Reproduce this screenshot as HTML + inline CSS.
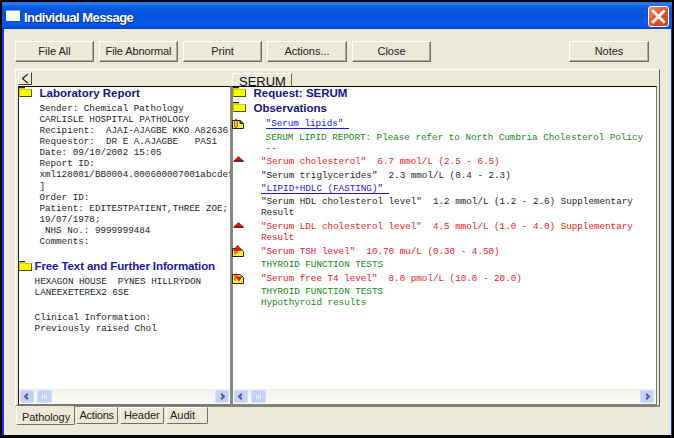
<!DOCTYPE html>
<html><head><meta charset="utf-8"><title>Individual Message</title>
<style>
*{box-sizing:border-box;margin:0;padding:0}
html,body{width:674px;height:438px;overflow:hidden;background:#000}
body{position:relative;font-family:"Liberation Sans",Arial,sans-serif;font-size:11px;color:#222}
.abs{position:absolute}
#win{position:absolute;left:2px;top:2px;width:670px;height:433px;background:#0a3ce0;border-radius:1px 1px 0 0}
#title{position:absolute;left:2px;top:2px;width:670px;height:27px;border-radius:1px 1px 0 0;background:linear-gradient(#1c6cf0 0%,#2b7cf3 7%,#0b5de0 18%,#0452de 45%,#0458e8 75%,#0656e4 88%,#0345c8 100%)}
#ico{position:absolute;left:6px;top:10px;width:14px;height:11px;background:#fffffa;border-top:1px solid #7fa6f5;box-shadow:0 0 1px #1a3a9a}
#ttxt{position:absolute;left:24px;top:10px;font:bold 13px/15px "Liberation Sans",sans-serif;color:#fff;letter-spacing:-0.55px;text-shadow:1px 1px 1px #0a2a8a;white-space:nowrap}
#close{position:absolute;left:648px;top:6px;width:21px;height:21px;border:1px solid #fff;border-radius:3px;background:linear-gradient(135deg,#ee9478 0%,#e05a34 45%,#cc4014 100%)}
#client{position:absolute;left:4px;top:29px;width:667px;height:406px;background:#ece9d8}
.btn{position:absolute;top:41px;height:21px;width:79px;background:#ece9d8;border:1px solid;border-color:#fff #716f64 #716f64 #fff;box-shadow:inset -1px -1px 0 #aca899;text-align:center;font:11px/18px "Liberation Sans",sans-serif;color:#222}
.mono{font-family:"Liberation Mono",monospace;font-size:9.25px;line-height:11px;white-space:pre;color:#262626}
.hd{position:absolute;font:bold 11.5px/12px "Liberation Sans",sans-serif;color:#15158a;white-space:nowrap}
.folder{position:absolute;width:13px;height:8px;background:#ffff00;border:1px solid;border-color:#c8c800 #5a5a00 #4a4a00 #c8c800}
.folder:before{content:"";position:absolute;left:-1px;top:-3px;width:6px;height:2px;background:#d8d800;border-top:1px solid #222}
.pane{position:absolute;background:#fff;overflow:hidden}
.ln{position:absolute;white-space:pre}
.red{color:#f01818}.grn{color:#128a12}.blu{color:#1818e8}
.ul{position:absolute;height:1px;background:#1818e8}
.sb{position:absolute;height:15px;background:linear-gradient(#f1efe9,#fefefb)}
.sbb{position:absolute;top:1px;width:14px;height:13px;background:#c2d2fc;border:1px solid #d3defd;border-radius:2px}
.sbb svg{position:absolute;left:0;top:0}
.tab{position:absolute;font:11px/14px "Liberation Sans",sans-serif;color:#222;background:#ece9d8;white-space:nowrap}
.icon{position:absolute}
</style></head><body>
<div id="win"></div>
<div id="title"></div>
<div id="ico"></div>
<div id="ttxt">Individual Message</div>
<div id="close"><svg width="19" height="19" viewBox="0 0 19 19"><path d="M3.2 3.2 L15.8 15.8 M15.8 3.2 L3.2 15.8" stroke="#fff" stroke-width="2.7"/></svg></div>
<div id="client"></div>

<div class="btn" style="left:15px">File All</div>
<div class="btn" style="left:99px;letter-spacing:-0.1px">File Abnormal</div>
<div class="btn" style="left:183px">Print</div>
<div class="btn" style="left:267px;width:80px">Actions...</div>
<div class="btn" style="left:352px">Close</div>
<div class="btn" style="left:569px;width:80px">Notes</div>

<!-- outer panel -->
<div class="abs" style="left:15px;top:69px;width:645px;height:338px;border-style:solid;border-width:1px 1px 2px 1px;border-color:#fff #5f5d53 #8f8d81 #fff"></div>

<!-- collapse button -->
<div class="abs" style="left:18px;top:72px;width:14px;height:13px;border:1px solid;border-color:#fff #404040 #404040 #fff"><svg class="abs" style="left:0;top:0" width="12" height="11" viewBox="0 0 12 11"><path d="M8.7 1.2 L3.5 5.6 L8.7 10" fill="none" stroke="#111" stroke-width="1.1"/></svg></div>

<!-- SERUM tab -->
<div class="abs" style="left:232px;top:73px;width:60px;height:13px;border:1px solid;border-color:#fff #6a685e transparent #fff;border-bottom:none;overflow:hidden"><span class="abs" style="left:6px;top:0px;font:13px/15px 'Liberation Sans',sans-serif;color:#111">SERUM</span></div>

<!-- left pane -->
<div class="pane" style="left:18px;top:86px;width:213px;height:320px;border-style:solid;border-width:1px 1px 2px 1px;border-color:#0a0a0a #c9c6ba #7b796e #1a1a1a"></div>
<!-- right pane -->
<div class="pane" style="left:230px;top:86px;width:427px;height:321px;border-style:solid;border-width:1px 1px 3px 3px;border-color:#0a0a0a #77756a #858378 #87857c"></div>

<!-- left content -->
<div class="abs" style="left:0;top:0;width:229.5px;height:404px;overflow:hidden">
<div class="folder" style="left:19px;top:89px"></div>
<div class="hd" style="left:39.5px;top:87px">Laboratory Report</div>
<div class="mono ln" style="left:39.4px;top:103.0px">Sender: Chemical Pathology</div>
<div class="mono ln" style="left:39.4px;top:114.1px">CARLISLE HOSPITAL PATHOLOGY</div>
<div class="mono ln" style="left:39.4px;top:125.1px">Recipient:  AJAI-AJAGBE KKO A82636</div>
<div class="mono ln" style="left:39.4px;top:136.2px">Requestor:  DR E A.AJAGBE   PAS1</div>
<div class="mono ln" style="left:39.4px;top:147.3px">Date: 09/10/2002 15:05</div>
<div class="mono ln" style="left:39.4px;top:158.3px">Report ID:</div>
<div class="mono ln" style="left:39.4px;top:169.4px">xml128001/BB0004.000600007001abcdef</div>
<div class="mono ln" style="left:39.4px;top:180.5px">]</div>
<div class="mono ln" style="left:39.4px;top:191.6px">Order ID:</div>
<div class="mono ln" style="left:39.4px;top:202.6px">Patient: EDITESTPATIENT,THREE ZOE;</div>
<div class="mono ln" style="left:39.4px;top:213.7px">19/07/1978;</div>
<div class="mono ln" style="left:39.4px;top:224.8px"> NHS No.: 9999999484</div>
<div class="mono ln" style="left:39.4px;top:235.8px">Comments:</div>
<div class="folder" style="left:19px;top:263px"></div>
<div class="hd" style="left:34.5px;top:260px;letter-spacing:-0.1px;color:#1818a8">Free Text and Further Information</div>
<div class="mono ln" style="left:34.6px;top:275.5px">HEXAGON HOUSE  PYNES HILLRYDON
LANEEXETEREX2 6SE</div>
<div class="mono ln" style="left:34.6px;top:312px">Clinical Information:
Previously raised Chol</div>
</div>

<!-- right content -->
<div class="folder" style="left:233px;top:89px"></div>
<div class="hd" style="left:253.5px;top:87px">Request: SERUM</div>
<div class="folder" style="left:233px;top:104px"></div>
<div class="hd" style="left:253.5px;top:102px">Observations</div>

<div class="mono ln blu" style="left:265.6px;top:117.5px">"Serum lipids" </div><div class="ul" style="left:266px;top:127.5px;width:83px"></div>
<div class="mono ln grn" style="left:265.6px;top:131.7px">SERUM LIPID REPORT: Please refer to North Cumbria Cholesterol Policy</div>
<div class="mono ln grn" style="left:265.6px;top:143px">--</div>
<div class="mono ln red" style="left:260.9px;top:156.3px">"Serum cholesterol"  6.7 mmol/L (2.5 - 6.5)</div>
<div class="mono ln" style="left:260.9px;top:169.5px">"Serum triglycerides"  2.3 mmol/L (0.4 - 2.3)</div>
<div class="mono ln blu" style="left:260.9px;top:183.2px">"LIPID+HDLC (FASTING)" </div><div class="ul" style="left:261px;top:193.3px;width:128px"></div>
<div class="mono ln" style="left:260.9px;top:196.3px">"Serum HDL cholesterol level"  1.2 mmol/L (1.2 - 2.6) Supplementary</div>
<div class="mono ln" style="left:260.9px;top:207.4px">Result</div>
<div class="mono ln red" style="left:260.9px;top:220.8px">"Serum LDL cholesterol level"  4.5 mmol/L (1.0 - 4.0) Supplementary</div>
<div class="mono ln red" style="left:260.9px;top:232px">Result</div>
<div class="mono ln red" style="left:260.9px;top:245.6px">"Serum TSH level"  10.70 mu/L (0.30 - 4.50)</div>
<div class="mono ln grn" style="left:260.9px;top:258.7px">THYROID FUNCTION TESTS</div>
<div class="mono ln red" style="left:260.9px;top:272.8px">"Serum free T4 level"  8.0 pmol/L (10.0 - 20.0)</div>
<div class="mono ln grn" style="left:260.9px;top:285.9px">THYROID FUNCTION TESTS</div>
<div class="mono ln grn" style="left:260.9px;top:296.5px">Hypothyroid results</div>

<!-- icons -->
<svg class="icon" style="left:232px;top:118px" width="13" height="11" viewBox="0 0 13 11"><path d="M0.5 2.5 H8 L11.5 5.5 V10.5 H0.5 Z" fill="#f4f43a" stroke="#222" stroke-width="1"/><path d="M8 2.5 V5.5 H11.5" fill="#444" stroke="#222" stroke-width="1"/><path d="M2.7 8.6 V2.2 Q4 -0.4 5.3 2.2 V8.6 Q4 10.2 2.7 8.6" fill="none" stroke="#c41a1a" stroke-width="0.9"/><path d="M4 3.5 V8" stroke="#e8c0a0" stroke-width="0.8"/></svg>
<svg class="icon" style="left:233px;top:155px" width="12" height="7" viewBox="0 0 12 7"><path d="M5.5 1.4 L10.4 6 H0.8 Z" fill="#f00" stroke="#8a0000" stroke-width="0.6"/><path d="M0.6 6.2 H10.8" stroke="#222" stroke-width="1.2"/></svg>
<svg class="icon" style="left:233px;top:220.5px" width="12" height="7" viewBox="0 0 12 7"><path d="M5.5 1.4 L10.4 6 H0.8 Z" fill="#f00" stroke="#8a0000" stroke-width="0.6"/><path d="M0.6 6.2 H10.8" stroke="#222" stroke-width="1.2"/></svg>
<svg class="icon" style="left:232px;top:245px" width="13" height="12" viewBox="0 0 13 12"><path d="M0.5 3.5 H8 L11.5 6.5 V11.5 H0.5 Z" fill="#f4f43a" stroke="#222" stroke-width="1"/><path d="M5.5 0.3 L10 5.4 H1.5 Z" fill="#f00" stroke="#a00" stroke-width="0.5"/><path d="M3 9.5 V4 Q4 2.5 5 4 V8.5" fill="none" stroke="#d01010" stroke-width="1"/></svg>
<svg class="icon" style="left:232px;top:273px" width="13" height="11" viewBox="0 0 13 11"><path d="M0.5 1.5 H8 L11.5 4.5 V10.5 H0.5 Z" fill="#f4f43a" stroke="#222" stroke-width="1"/><path d="M3.5 3.5 H10.5 L7 8.5 Z" fill="#e01010"/><path d="M3 7.5 V1.5 Q4 0 5 1.5 V6" fill="none" stroke="#d01010" stroke-width="1"/></svg>

<!-- scrollbars -->
<div class="sb" style="left:19px;top:389px;width:211px">
 <div class="sbb" style="left:0.5px"><svg width="12" height="11" viewBox="0 0 12 11"><path d="M6.9 2.7 L4.1 5.5 L6.9 8.3" fill="none" stroke="#4d6185" stroke-width="2"/></svg></div>
 <div class="sbb" style="left:17.5px;width:15px"><svg width="13" height="11" viewBox="0 0 13 11"><path d="M4.5 3.5V8M6.5 3.5V8M8.5 3.5V8" stroke="#e6edff" stroke-width="1"/></svg></div>
 <div class="sbb" style="left:195.5px"><svg width="12" height="11" viewBox="0 0 12 11"><path d="M5.1 2.7 L7.9 5.5 L5.1 8.3" fill="none" stroke="#4d6185" stroke-width="2"/></svg></div>
</div>
<div class="sb" style="left:233px;top:389px;width:423px">
 <div class="sbb" style="left:0.5px"><svg width="12" height="11" viewBox="0 0 12 11"><path d="M6.9 2.7 L4.1 5.5 L6.9 8.3" fill="none" stroke="#4d6185" stroke-width="2"/></svg></div>
 <div class="sbb" style="left:17.5px;width:15px"><svg width="13" height="11" viewBox="0 0 13 11"><path d="M4.5 3.5V8M6.5 3.5V8M8.5 3.5V8" stroke="#e6edff" stroke-width="1"/></svg></div>
 <div class="sbb" style="left:406.7px"><svg width="12" height="11" viewBox="0 0 12 11"><path d="M5.1 2.7 L7.9 5.5 L5.1 8.3" fill="none" stroke="#4d6185" stroke-width="2"/></svg></div>
</div>

<!-- bottom tabs -->
<div class="tab" style="left:16px;top:406px;width:59px;height:18.5px;border-style:solid;border-width:0 1px 1px 1px;border-color:#fff #716f64 #716f64 #fff;border-radius:0 0 2px 2px"><span class="abs" style="left:5px;top:3.5px;letter-spacing:-0.1px">Pathology</span></div>
<div class="tab" style="left:75.5px;top:407px;width:42.5px;height:16.5px;border:1px solid;border-color:#fff #716f64 #716f64 #fff;border-radius:0 0 2px 2px"><span class="abs" style="left:3px;top:0px;letter-spacing:-0.25px">Actions</span></div>
<div class="tab" style="left:119.5px;top:407px;width:44.5px;height:16.5px;border:1px solid;border-color:#fff #716f64 #716f64 #fff;border-radius:0 0 2px 2px"><span class="abs" style="left:3.5px;top:0px;letter-spacing:-0.1px">Header</span></div>
<div class="tab" style="left:165.5px;top:407px;width:42.5px;height:16.5px;border:1px solid;border-color:#fff #716f64 #716f64 #fff;border-radius:0 0 2px 2px"><span class="abs" style="left:3.5px;top:0px">Audit</span></div>
</body></html>
